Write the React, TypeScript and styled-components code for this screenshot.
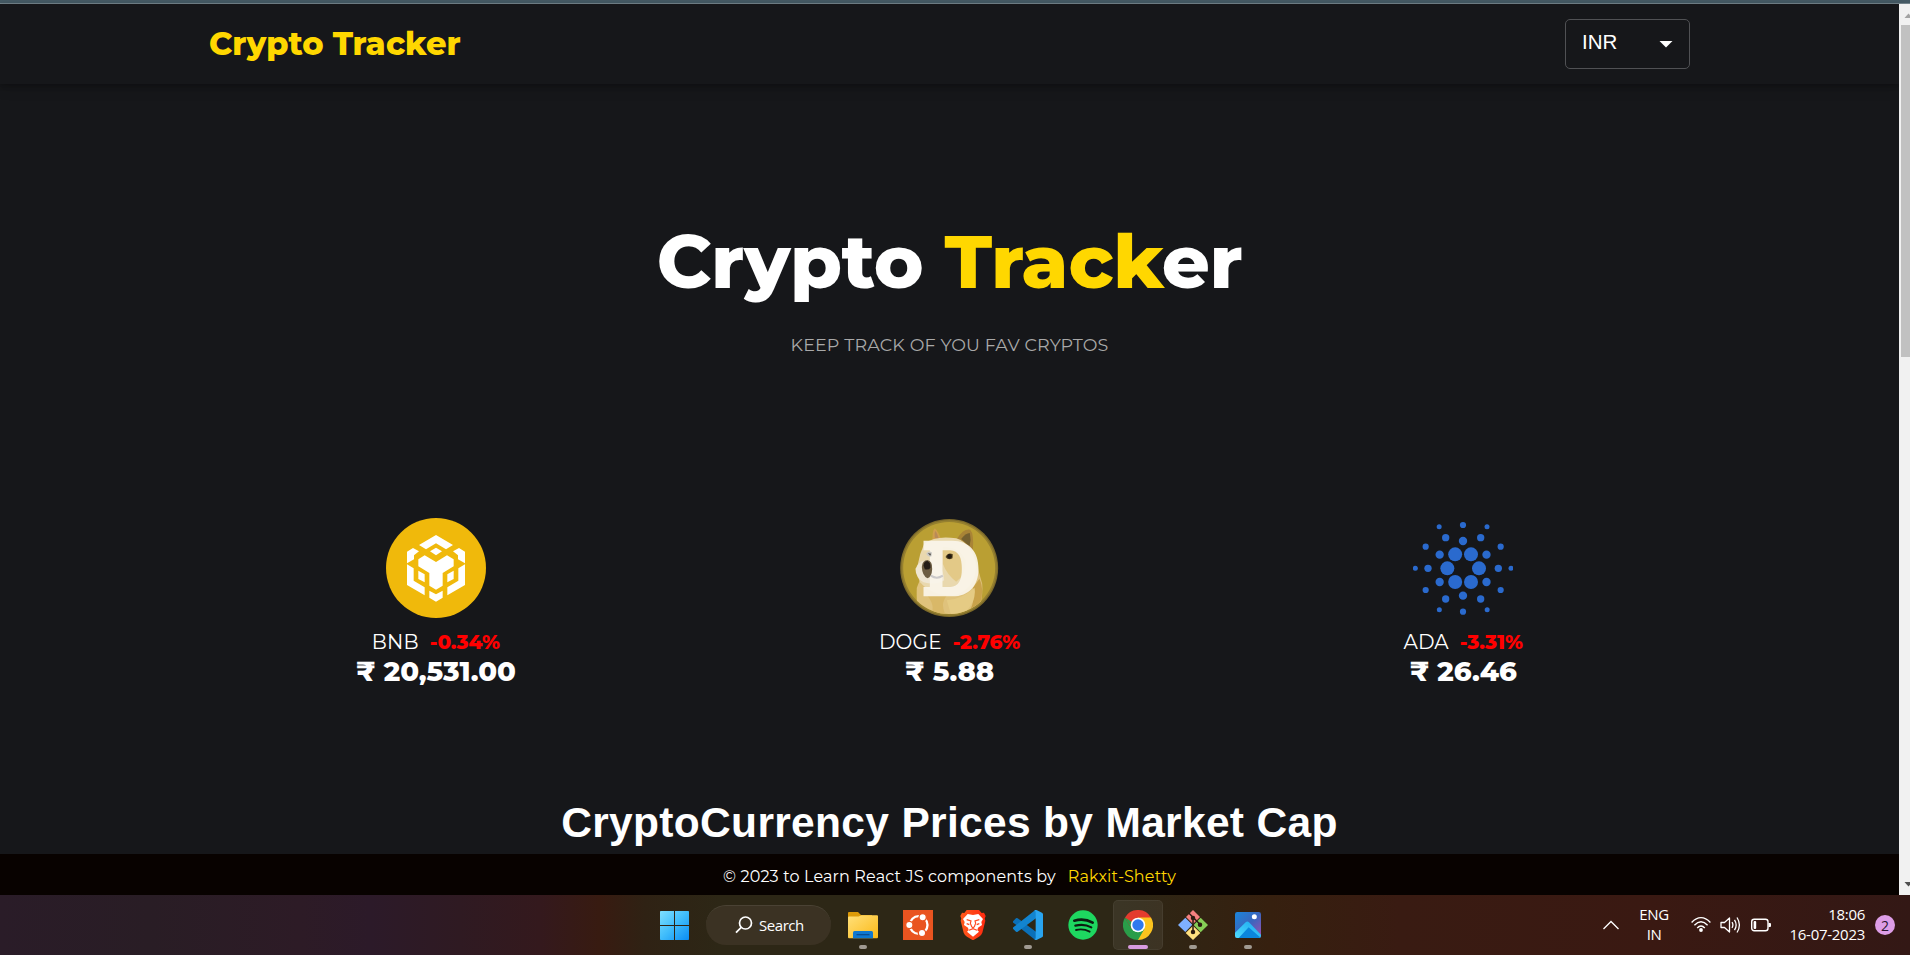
import React from "react";
import styled, { createGlobalStyle } from "styled-components";

const GlobalStyle = createGlobalStyle`
  * { box-sizing: border-box; }
  html, body { margin: 0; padding: 0; overflow: hidden; }
  body { background: #16171a; font-family: Montserrat, Inter, sans-serif; color: #fff; }
`;

const Screen = styled.div`
  width: 1910px;
  height: 955px;
  display: flex;
  flex-direction: column;
  overflow: hidden;
`;

const BrowserEdge = styled.div`
  flex: none;
  height: 4px;
  background: #455a64;
  border-bottom: 1px solid #74848b;
`;

const Viewport = styled.div`
  flex: none;
  height: 891px;
  display: flex;
`;

const Page = styled.main`
  width: 1899px;
  background: #16171a;
  display: flex;
  flex-direction: column;
`;

const Header = styled.header`
  flex: none;
  height: 80px;
  padding: 0 209px;
  display: flex;
  align-items: center;
  justify-content: space-between;
  box-shadow: 0 2px 5px rgba(0, 0, 0, 0.22), 0 5px 12px rgba(0, 0, 0, 0.14);
`;

const Logo = styled.div`
  font-size: 32px;
  font-weight: 800;
  letter-spacing: -0.05px;
  line-height: 40px;
  color: gold;
`;

const CurrencySelect = styled.button`
  width: 125px;
  height: 50px;
  padding: 0 16px;
  display: flex;
  align-items: center;
  justify-content: space-between;
  border: 1px solid #505154;
  border-radius: 5px;
  background: transparent;
  color: #fff;
  font: 20.5px "Liberation Sans", Arial, sans-serif;
`;

const SelectValue = styled.span`
  padding-bottom: 4px;
`;

const Hero = styled.section`
  flex: none;
  height: 434px;
  padding-top: 132px;
  display: flex;
  flex-direction: column;
  align-items: center;
`;

const HeroTitle = styled.h1`
  margin: 0;
  font-size: 75px;
  font-weight: 800;
  line-height: 90px;
  letter-spacing: -0.4px;
  white-space: pre;
`;

const Gold = styled.span`
  color: gold;
`;

const HeroSubtitle = styled.p`
  margin: 28px 0 0;
  font-size: 17.5px;
  font-weight: 400;
  line-height: 22px;
  letter-spacing: 0.14px;
  color: #a9a9a9;
`;

const Carousel = styled.section`
  flex: none;
  width: 1541px;
  height: 279px;
  margin: 0 auto;
  display: grid;
  grid-template-columns: repeat(3, 1fr);
`;

const CoinCard = styled.article`
  display: flex;
  flex-direction: column;
  align-items: center;
`;

const CoinArt = styled.svg`
  width: 100px;
  height: 100px;
`;

const CoinLabel = styled.div`
  margin-top: 11px;
  display: flex;
  gap: 11px;
  font-size: 20px;
  line-height: 27px;
  letter-spacing: 0.15px;
`;

const Change = styled.span`
  color: red;
  font-weight: 800;
  letter-spacing: -0.05px;
`;

const Price = styled.div`
  margin-top: -1px;
  font-size: 27.5px;
  font-weight: 800;
  line-height: 32px;
`;

const MarketHeading = styled.h2`
  margin: 0;
  font: bold 42.5px/52px "Liberation Sans", Arial, sans-serif;
  letter-spacing: 0.32px;
  text-align: center;
`;

const Footer = styled.footer`
  margin-top: auto;
  height: 41px;
  padding-top: 4px;
  display: flex;
  align-items: center;
  justify-content: center;
  gap: 12px;
  background: #080200;
  font-size: 16px;
  letter-spacing: 0.15px;
`;

const FooterLink = styled.a`
  color: gold;
`;

const ScrollTrack = styled.div`
  width: 11px;
  overflow: hidden;
  padding-left: 2px;
  background: #f1f1f1;
  display: flex;
  flex-direction: column;
  justify-content: space-between;
`;

const ScrollArrow = styled.svg`
  flex: none;
  width: 17px;
  height: 21px;
`;

const ScrollThumb = styled.div`
  width: 13px;
  height: 332px;
  margin-bottom: auto;
  background: #c1c1c1;
`;

const Taskbar = styled.nav`
  flex: none;
  height: 60px;
  padding-left: 649px;
  padding-right: 15px;
  display: flex;
  align-items: center;
  justify-content: space-between;
  font-family: "Segoe UI", "Open Sans", sans-serif;
  background: linear-gradient(90deg, #2a1c28 0, #291d25 150px, #2d1b26 300px, #2c1a29 370px,
    #2f1a22 460px, #34191d 540px, #381b11 600px, #2f2214 645px, #2d2716 720px,
    #2d2716 1120px, #36200f 1270px, #391b12 1400px, #3a1912 1650px, #331815 1910px);
`;

const AppRow = styled.div`
  display: flex;
  align-items: center;
  gap: 5px;
`;

const AppButton = styled.div<{ $active?: boolean }>`
  position: relative;
  width: 50px;
  height: 50px;
  display: flex;
  align-items: center;
  justify-content: center;
  border-radius: 5px;
  background: ${(p) => (p.$active ? "rgba(255,255,255,0.065)" : "transparent")};
  box-shadow: ${(p) => (p.$active ? "inset 0 0 0 1px rgba(255,255,255,0.05)" : "none")};
`;

const AppIcon = styled.svg`
  width: 30px;
  height: 30px;
`;

const RunningMark = styled.span<{ $active?: boolean }>`
  position: absolute;
  bottom: 1px;
  left: 50%;
  transform: translateX(-50%);
  width: ${(p) => (p.$active ? 20 : 8)}px;
  height: 4px;
  border-radius: 2px;
  background: ${(p) => (p.$active ? "#d89be0" : "#a09a92")};
`;

const SearchPill = styled.div`
  width: 125px;
  height: 40px;
  margin: 0 2px;
  padding-left: 29px;
  padding-bottom: 2px;
  display: flex;
  align-items: center;
  gap: 6px;
  border-radius: 20px;
  background: #3b3223;
  border-top: 1px solid #4a4234;
  font-size: 15px;
  letter-spacing: -0.45px;
`;

const SearchGlyph = styled.svg`
  width: 18px;
  height: 18px;
`;

const Tray = styled.div`
  display: flex;
  align-items: center;
  font-size: 15px;
  line-height: 20px;
`;

const TrayGlyph = styled.svg<{ $w: number; $gap: number }>`
  flex: none;
  width: ${(p) => p.$w}px;
  height: 20px;
  margin-right: ${(p) => p.$gap}px;
`;

const Language = styled.div`
  width: 40px;
  margin-right: 17px;
  padding-bottom: 2px;
  text-align: center;
  letter-spacing: -0.4px;
`;

const Clock = styled.div`
  width: 84px;
  margin-right: 10px;
  padding-bottom: 2px;
  text-align: right;
  letter-spacing: -0.28px;
`;

const Badge = styled.div`
  width: 20px;
  height: 20px;
  border-radius: 50%;
  background: #dd9de6;
  color: #2a1530;
  font-size: 14px;
  line-height: 21px;
  text-align: center;
`;

const bnbHalf = [
  "200,154 218,143 236,153 221,165 221,177 200,189",
  "200,192 220,204 220,241 253,261 253,285 200,254",
  "234,211 253,222 253,246 234,236",
];

const BnbArt = () => (
  <CoinArt viewBox="137 53 300 300">
    <circle cx="287" cy="203" r="150" fill="#f0b90b" />
    <g fill="#fff">
      <polygon points="287,104 338,134 317,147 287,129 257,147 236,134" />
      <polygon points="287,142 305,153 287,165 269,153" />
      <polygon points="267,271 287,282 307,271 307,292 287,304 267,292" />
      <polygon points="234,177 253,165 287,185 320,165 340,177 340,198 307,218 307,256 287,268 267,256 267,218 234,198" />
      {bnbHalf.map((p) => <polygon key={p} points={p} />)}
      <g transform="translate(574 0) scale(-1 1)">
        {bnbHalf.map((p) => <polygon key={p} points={p} />)}
      </g>
    </g>
  </CoinArt>
);

const DogeArt = () => (
  <CoinArt viewBox="118.5 53 300 300">
    <defs>
      <clipPath id="doge-face"><circle cx="269" cy="203" r="138" /></clipPath>
    </defs>
    <circle cx="269" cy="203" r="147" fill="#7d6a2a" />
    <circle cx="269" cy="203" r="143" fill="#96802f" />
    <circle cx="269" cy="203" r="138" fill="#ba9f33" />
    <g clipPath="url(#doge-face)">
      <path d="M172 262 Q170 300 176 350 L350 350 Q372 300 368 250 L340 150 L200 190Z" fill="#dfc27c" />
      <path d="M360 235 Q375 265 362 310 L330 335 Q350 290 340 262Z" fill="#c9a24a" />
      <path d="M205 288 Q230 320 212 345 L260 348 Q240 310 262 286Z" fill="#d9b868" />
      <path d="M262 300 Q310 295 345 262 Q352 300 318 335 L275 345Z" fill="#e5cb84" />
      <path d="M220 128 Q216 92 226 84 Q236 92 246 120Z" fill="#cf9f4c" />
      <path d="M226 112 Q224 96 228 92 Q234 100 238 116Z" fill="#b98a58" />
      <path d="M292 116 Q312 84 332 88 Q344 100 340 150 L318 142Z" fill="#a98436" />
      <path d="M305 116 Q318 98 331 98 Q336 118 330 138Z" fill="#75602f" />
      <path d="M194 130 Q230 104 290 114 Q340 130 350 200 Q345 270 280 286 Q215 286 182 246 Q170 222 174 196 Q180 160 194 130Z" fill="#e9d8ae" />
      <path d="M250 140 Q300 140 318 180 Q320 225 290 244 Q262 222 250 190Z" fill="#e3c987" />
      <path d="M168 205 Q176 184 200 180 Q250 184 254 240 Q230 256 192 246 Q168 232 168 205Z" fill="#efe6d2" />
    </g>
    <path fillRule="evenodd" d="M192 121 H278 C330 121 357 155 357 205 C357 255 330 288 278 288 H192 V260 H211 V150 H192Z M249 150 V260 H272 C298 258 307 238 307 205 C307 172 298 152 272 150Z" fill="#faf5ea" fillOpacity=".92" />
    <path d="M214 226 Q232 238 250 226" fill="none" stroke="#cbc9c9" strokeWidth="6" />
    <path d="M200 160 Q207 150 217 156 L216 168 Q206 172 200 160Z" fill="#cac9c5" />
    <path d="M205 158 L215 160 L212 166Z" fill="#55514a" />
    <path d="M258 170 Q266 154 280 162 L279 174 Q266 181 258 170Z" fill="#54431f" />
    <circle cx="270" cy="168" r="7" fill="#221b12" />
    <path d="M187 200 Q188 180 204 179 Q219 182 218 206 Q217 230 204 234 Q188 226 187 200Z" fill="#6d5d42" />
    <path d="M192 196 Q193 182 204 182 Q214 186 213 202 Q208 210 196 207Z" fill="#241d18" />
  </CoinArt>
);

const adaDots: [number, number, number][] = [
  [224.5, 162, 21], [272, 162, 21], [201, 204, 21], [296, 204, 21], [224.5, 245, 21], [272, 245, 21],
  [248, 122, 12.5], [178, 163, 12.5], [318.5, 163, 12.5], [178, 245, 12.5], [318.5, 245, 12.5], [248, 286, 12.5],
  [196, 112, 11], [301, 112, 11], [143, 204, 11], [354, 204, 11], [196, 296, 11], [301, 296, 11],
  [248, 74, 9.3], [136, 139, 9.3], [361, 139, 9.3], [136, 269, 9.3], [361, 269, 9.3], [248, 334, 9.3],
  [176.5, 79, 7.5], [320, 79, 7.5], [105, 204, 7.5], [392, 204, 7.5], [177, 328, 7.5], [320.5, 328, 7.5],
];

const AdaArt = () => (
  <CoinArt viewBox="98 53 300 300">
    {adaDots.map(([x, y, r]) => <circle key={`${x}-${y}`} cx={x} cy={y} r={r} fill="#2a6ace" />)}
  </CoinArt>
);

const coins = [
  { symbol: "BNB", change: "-0.34%", price: "₹ 20,531.00", art: <BnbArt /> },
  { symbol: "DOGE", change: "-2.76%", price: "₹ 5.88", art: <DogeArt /> },
  { symbol: "ADA", change: "-3.31%", price: "₹ 26.46", art: <AdaArt /> },
];

const WindowsIcon = () => (
  <AppIcon viewBox="0 0 30 30">
    <defs>
      <linearGradient id="win" x1="0" y1="0" x2="1" y2="1">
        <stop offset="0" stopColor="#7fe0ff" /><stop offset=".5" stopColor="#3fbcfb" /><stop offset="1" stopColor="#0a8cf5" />
      </linearGradient>
    </defs>
    <path d="M1.800 1H15v14H1V1.800Q1 1 1.800 1zM16 1h13.200q.8 0 .8.8V15H16zM1 16H15v14H1.800Q1 30 1 29.200zM16 16h14v13.200q0 .8-.8.8H16z" fill="url(#win)" />
  </AppIcon>
);

const FolderIcon = () => (
  <AppIcon viewBox="0 0 30 30">
    <defs>
      <linearGradient id="fold" x1="0" y1="0" x2="1" y2="1">
        <stop offset="0" stopColor="#ffe07a" /><stop offset="1" stopColor="#fbb917" />
      </linearGradient>
    </defs>
    <path d="M0 3Q0 2 1 2H10L13 5H24V10H0Z" fill="#dc9a08" />
    <path d="M0 7.500Q0 6.500 1 6.500H10.500L13.500 5.300H29Q30 5.300 30 6.300V27Q30 28.300 29 28.300H1Q0 28.300 0 27Z" fill="url(#fold)" />
    <path d="M5 28.300V22.500Q5 21 6.500 21H23.500Q25 21 25 22.500V28.300Z" fill="#0f78d0" />
    <path d="M8.500 24.700H21.500" stroke="#0a4a8c" strokeWidth="1.200" />
  </AppIcon>
);

const UbuntuIcon = () => (
  <AppIcon viewBox="789 60 90 90">
    <rect x="789" y="60" width="90" height="90" fill="#e95420" />
    <circle cx="836" cy="105" r="26.500" fill="none" stroke="#fff" strokeWidth="7" />
    <g fill="#fff" stroke="#e95420" strokeWidth="4">
      <circle cx="808" cy="105" r="11" /><circle cx="848" cy="82" r="11" /><circle cx="846" cy="129" r="11" />
    </g>
  </AppIcon>
);

const BraveIcon = () => (
  <AppIcon viewBox="54 60 90 90">
    <defs>
      <linearGradient id="brave"><stop offset="0" stopColor="#ff5a1c" /><stop offset="1" stopColor="#ff2a10" /></linearGradient>
    </defs>
    <path d="M80 60H117L125 69L132 68L137 78L134 86L136 92L127 128Q124 136 117 140L99 151L81 140Q74 136 71 128L62 92L64 86L61 78L66 68L73 69Z" fill="url(#brave)" />
    <path d="M83 72L99 75L115 72L129 87L124 96L126 105L114 113L112 121L117 125L99 140L81 125L86 121L84 113L72 105L74 96L69 87Z" fill="#fff" />
    <g fill="none" stroke="#ff4a22" strokeWidth="3.500">
      <path d="M80 89L93 93L91 100L95 110L99 114L103 110L107 100L105 93L118 89" />
      <path d="M87 121L99 116L111 121M80 101L88 104M118 101L110 104" />
    </g>
  </AppIcon>
);

const CodeIcon = () => (
  <AppIcon viewBox="219 60 90 90">
    <path d="M219 94L228 84.500Q230 83.500 233 85L290 127V148Q287 151 283 148L220 98Q217 96 219 94Z" fill="#0b70b8" />
    <path d="M219 116L228 125.500Q230 126.500 233 125L290 83V62Q287 59 283 62L220 112Q217 114 219 116Z" fill="#1284cf" />
    <path d="M285 60Q288 59 291 61L306 68Q309 70 309 73V137Q309 140 306 142L291 149Q287 151 283 148Q287 148 287 143V67Q287 62 283 62Z" fill="#29a4ef" />
  </AppIcon>
);

const SpotifyIcon = () => (
  <AppIcon viewBox="384 60 90 90">
    <circle cx="429" cy="105" r="44" fill="#1ed760" />
    <g fill="none" stroke="#0c1c10" strokeLinecap="round">
      <path d="M403 92Q433 84 458 98" strokeWidth="8" />
      <path d="M406 107Q432 100 454 112" strokeWidth="6.500" />
      <path d="M408 120Q430 115 449 125" strokeWidth="5.500" />
    </g>
  </AppIcon>
);

const ChromeIcon = () => (
  <AppIcon viewBox="0 0 30 30">
    <path d="M2 7.500A15 15 0 0 1 28 7.500L15 15Z" fill="#e33b2e" />
    <path d="M28 7.500A15 15 0 0 1 15 30L15 15L15 7.500Z" fill="#fcc31e" />
    <path d="M15 30A15 15 0 0 1 2 7.500L8.500 18.750L15 15L21.500 18.750Z" fill="#2a9d49" />
    <path d="M2 7.500L8.500 18.750L15 7.500Z" fill="#e33b2e" />
    <path d="M2 7.500L8.500 18.750L9 12Z" fill="#2a9d49" />
    <circle cx="15" cy="15" r="7.300" fill="#fff" />
    <circle cx="15" cy="15" r="5.700" fill="#2f79ee" />
  </AppIcon>
);

const GitIcon = () => (
  <AppIcon viewBox="714 60 90 90">
    <path d="M759 60L780 81L759 102L738 81Z" fill="#f58080" />
    <path d="M736 83L757 104L736 126L714 105Z" fill="#7fb0ff" />
    <path d="M782 83L804 105L782 127L761 105Z" fill="#86cf56" />
    <path d="M759 107L781 129L759 150L737 129Z" fill="#ffe080" />
    <g stroke="#2c1c12" strokeWidth="4.500" fill="#2c1c12">
      <path d="M747 70L782 105M759 83V126" fill="none" />
      <circle cx="759" cy="84" r="4.500" /><circle cx="780" cy="104" r="4.500" /><circle cx="759" cy="126" r="4.500" />
    </g>
  </AppIcon>
);

const PhotosIcon = () => (
  <AppIcon viewBox="879 60 90 90">
    <defs>
      <linearGradient id="sky" x1="0" y1="0" x2="1" y2="1">
        <stop offset="0" stopColor="#1a86dc" /><stop offset=".5" stopColor="#3a66bd" /><stop offset="1" stopColor="#a04fb0" />
      </linearGradient>
      <linearGradient id="hill" x1="0" y1="1" x2="1" y2="0">
        <stop offset="0" stopColor="#4fdcff" /><stop offset="1" stopColor="#18a5ee" />
      </linearGradient>
      <clipPath id="photo"><rect x="885" y="66" width="78" height="78" rx="7" /></clipPath>
    </defs>
    <g clipPath="url(#photo)">
      <rect x="885" y="66" width="78" height="78" fill="url(#sky)" />
      <path d="M885 128L917 97Q922 92 927 97L963 134V144H885Z" fill="url(#hill)" />
      <path d="M926 112L963 144H896Z" fill="#0b86dc" />
    </g>
    <circle cx="943" cy="80" r="7.500" fill="#fff" />
  </AppIcon>
);

const apps = [
  { name: "files", icon: <FolderIcon />, running: true },
  { name: "ubuntu", icon: <UbuntuIcon /> },
  { name: "brave", icon: <BraveIcon /> },
  { name: "code", icon: <CodeIcon />, running: true },
  { name: "spotify", icon: <SpotifyIcon /> },
  { name: "chrome", icon: <ChromeIcon />, running: true, active: true },
  { name: "git", icon: <GitIcon />, running: true },
  { name: "photos", icon: <PhotosIcon />, running: true },
];

export default function App() {
  return (
    <Screen>
      <GlobalStyle />
      <BrowserEdge />
      <Viewport>
        <Page>
          <Header>
            <Logo>Crypto Tracker</Logo>
            <CurrencySelect>
              <SelectValue>INR</SelectValue>
              <svg width="14" height="7" viewBox="0 0 14 7"><path d="M.5 0H13.500L7 6.500Z" fill="#fff" /></svg>
            </CurrencySelect>
          </Header>
          <Hero>
            <HeroTitle>Crypto <Gold>Track</Gold>er</HeroTitle>
            <HeroSubtitle>KEEP TRACK OF YOU FAV CRYPTOS</HeroSubtitle>
          </Hero>
          <Carousel>
            {coins.map((c) => (
              <CoinCard key={c.symbol}>
                {c.art}
                <CoinLabel>
                  {c.symbol}
                  <Change>{c.change}</Change>
                </CoinLabel>
                <Price>{c.price}</Price>
              </CoinCard>
            ))}
          </Carousel>
          <MarketHeading>CryptoCurrency Prices by Market Cap</MarketHeading>
          <Footer>
            <span>© 2023 to Learn React JS components by</span>
            <FooterLink>Rakxit-Shetty</FooterLink>
          </Footer>
        </Page>
        <ScrollTrack>
          <ScrollArrow viewBox="0 0 17 21"><path d="M3.500 14H11.500L7.500 9.500Z" fill="#a3a3a3" /></ScrollArrow>
          <ScrollThumb />
          <ScrollArrow viewBox="0 0 17 21"><path d="M3.500 8H11.500L7.500 12.500Z" fill="#505050" /></ScrollArrow>
        </ScrollTrack>
      </Viewport>
      <Taskbar>
        <AppRow>
          <AppButton><WindowsIcon /></AppButton>
          <SearchPill>
            <SearchGlyph viewBox="0 0 18 18">
              <g fill="none" stroke="#fff" strokeWidth="1.700"><circle cx="10.500" cy="7" r="6" /><path d="M6.200 11.300L1 16.700" /></g>
            </SearchGlyph>
            Search
          </SearchPill>
          {apps.map((a) => (
            <AppButton key={a.name} $active={a.active}>
              {a.icon}
              {a.running && <RunningMark $active={a.active} />}
            </AppButton>
          ))}
        </AppRow>
        <Tray>
          <TrayGlyph $w={18} $gap={14} viewBox="0 0 18 20">
            <path d="M1.500 14L9 6.500L16.500 14" fill="none" stroke="#fff" strokeWidth="1.300" />
          </TrayGlyph>
          <Language>ENG<br />IN</Language>
          <TrayGlyph $w={20} $gap={9} viewBox="0 0 20 20">
            <g fill="none" stroke="#fff" strokeWidth="1.400">
              <path d="M.6 7.400Q10-2.200 19.400 7.400M3.400 10.200Q10 3.400 16.600 10.200M6.200 13Q10 9 13.800 13" />
            </g>
            <circle cx="10" cy="15" r="1.900" fill="#fff" />
          </TrayGlyph>
          <TrayGlyph $w={21} $gap={10} viewBox="0 0 21 20">
            <g fill="none" stroke="#fff" strokeWidth="1.300" strokeLinejoin="round">
              <path d="M1 7.500H4.500L9.500 3V17L4.500 12.500H1Z" />
              <path d="M12 7.200Q13.800 10 12 12.800M14.500 4.800Q17.800 10 14.500 15.200M17 2.500Q21.800 10 17 17.500" />
            </g>
          </TrayGlyph>
          <TrayGlyph $w={20} $gap={10} viewBox="0 0 20 20">
            <rect x=".7" y="4.200" width="16.300" height="11.600" rx="2.500" fill="none" stroke="#fff" strokeWidth="1.400" />
            <rect x="2.600" y="6" width="2.600" height="8" rx="1" fill="#fff" />
            <path d="M17.500 8H19Q20 8 20 9V11Q20 12 19 12H17.500Z" fill="#fff" />
          </TrayGlyph>
          <Clock>18:06<br />16-07-2023</Clock>
          <Badge>2</Badge>
        </Tray>
      </Taskbar>
    </Screen>
  );
}
